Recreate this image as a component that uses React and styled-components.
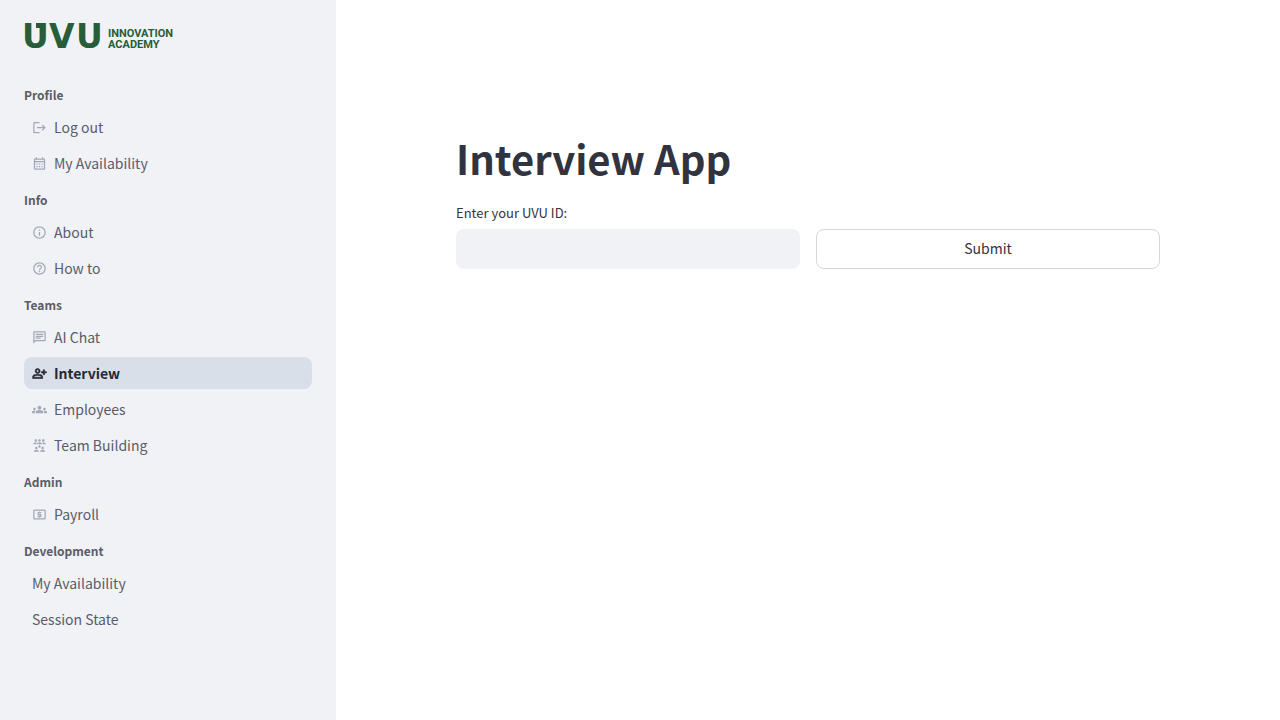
import React from "react";
import styled, { createGlobalStyle } from "styled-components";
import {
  MdLogout,
  MdOutlineCalendarMonth,
  MdInfoOutline,
  MdHelpOutline,
  MdOutlineChat,
  MdOutlinePersonAddAlt,
  MdGroups,
  MdReduceCapacity,
  MdOutlineLocalAtm,
} from "react-icons/md";

const GlobalStyle = createGlobalStyle`
  *, *::before, *::after { box-sizing: border-box; }
  body {
    margin: 0;
    background: #ffffff;
    color: #31333f;
    font-family: "Source Sans Pro", "Noto Sans CJK SC", sans-serif;
    font-size: 14px;
  }
`;

const Layout = styled.div`
  display: flex;
  min-height: 100vh;
`;

const Sidebar = styled.aside`
  flex: 0 0 336px;
  padding: 16px 24px 24px;
  background: #f0f2f6;
`;

const LogoLink = styled.a`
  display: block;
  height: 40px;
  margin: 0 0 18px -4px;
  svg { display: block; }
`;

const LogoText = styled.text`
  fill: #275d38;
  font-family: ${(p) => (p.$large ? '"DejaVu Sans"' : "Roboto")}, sans-serif;
  font-weight: 700;
  font-size: ${(p) => (p.$large ? 33 : 11)}px;
`;

const SectionTitle = styled.h2`
  margin: 0;
  padding: 11px 0 6px;
  color: #5a5c69;
  font-size: 12px;
  font-weight: 700;
  line-height: 20px;
`;

const NavList = styled.ul`
  display: flex;
  flex-direction: column;
  gap: 4px;
  margin: 0;
  padding: 0;
  list-style: none;
`;

const NavLink = styled.a`
  display: flex;
  align-items: center;
  gap: 7px;
  height: 32px;
  padding: 0 8px;
  border-radius: 8px;
  background: ${(p) => (p.$active ? "#d9dfe9" : "transparent")};
  color: ${(p) => (p.$active ? "#262833" : "#5a5c69")};
  font-size: 14px;
  font-weight: ${(p) => (p.$active ? 700 : 400)};
  line-height: 24px;
  text-decoration: none;
  svg {
    flex: none;
    width: 15px;
    height: 15px;
    color: ${(p) => (p.$active ? "#262833" : "#a3a8b8")};
  }
  svg path:not([fill="none"]) {
    stroke-width: ${(p) => (p.$active ? 1 : 0)};
  }
  svg path[fill="none"] {
    stroke: none;
  }
`;

const Main = styled.main`
  flex: 1;
  min-width: 0;
  padding: 128px 16px 64px;
`;

const Content = styled.div`
  max-width: 704px;
  margin: 0 auto;
`;

const Title = styled.h1`
  margin: 0 0 13px;
  font-size: 40px;
  font-weight: 700;
  line-height: 60px;
`;

const Form = styled.form`
  display: grid;
  grid-template-columns: 1fr 1fr;
  align-items: end;
  gap: 16px;
`;

const Field = styled.div`
  display: flex;
  flex-direction: column;
  gap: 4px;
`;

const Label = styled.label`
  font-size: 13px;
  line-height: 24px;
`;

const Input = styled.input`
  width: 100%;
  height: 40px;
  padding: 0 12px;
  border: 0;
  border-radius: 8px;
  background: #f0f2f6;
  color: inherit;
  font: inherit;
`;

const Button = styled.button`
  height: 40px;
  padding: 0 12px 2px;
  border: 1px solid #d6d6d9;
  border-radius: 8px;
  background: #ffffff;
  color: inherit;
  font: inherit;
  cursor: pointer;
`;

const sections = [
  {
    title: "Profile",
    items: [
      { label: "Log out", icon: MdLogout },
      { label: "My Availability", icon: MdOutlineCalendarMonth },
    ],
  },
  {
    title: "Info",
    items: [
      { label: "About", icon: MdInfoOutline },
      { label: "How to", icon: MdHelpOutline },
    ],
  },
  {
    title: "Teams",
    items: [
      { label: "AI Chat", icon: MdOutlineChat },
      { label: "Interview", icon: MdOutlinePersonAddAlt, active: true },
      { label: "Employees", icon: MdGroups },
      { label: "Team Building", icon: MdReduceCapacity },
    ],
  },
  { title: "Admin", items: [{ label: "Payroll", icon: MdOutlineLocalAtm }] },
  {
    title: "Development",
    items: [{ label: "My Availability" }, { label: "Session State" }],
  },
];

function Logo() {
  return (
    <svg width="160" height="40" viewBox="-4 -8 160 40" role="img" aria-label="UVU Innovation Academy">
      <LogoText $large x="-2 25 52" y="24">UVU</LogoText>
      <rect x="12" y="-1" width="8" height="5" fill="#275d38" />
      <LogoText x="84" y="13">INNOVATION</LogoText>
      <LogoText x="84" y="24">ACADEMY</LogoText>
    </svg>
  );
}

export default function App() {
  return (
    <Layout>
      <GlobalStyle />
      <Sidebar>
        <LogoLink href="#home">
          <Logo />
        </LogoLink>
        <nav aria-label="Pages">
          {sections.map(({ title, items }) => (
            <section key={title}>
              <SectionTitle>{title}</SectionTitle>
              <NavList>
                {items.map(({ label, icon: Icon, active }) => (
                  <li key={label}>
                    <NavLink href="#page" $active={active} aria-current={active ? "page" : undefined}>
                      {Icon && <Icon aria-hidden="true" />}
                      {label}
                    </NavLink>
                  </li>
                ))}
              </NavList>
            </section>
          ))}
        </nav>
      </Sidebar>
      <Main>
        <Content>
          <Title>Interview App</Title>
          <Form onSubmit={(e) => e.preventDefault()}>
            <Field>
              <Label htmlFor="uvu-id">Enter your UVU ID:</Label>
              <Input id="uvu-id" type="text" />
            </Field>
            <Button type="submit">Submit</Button>
          </Form>
        </Content>
      </Main>
    </Layout>
  );
}
